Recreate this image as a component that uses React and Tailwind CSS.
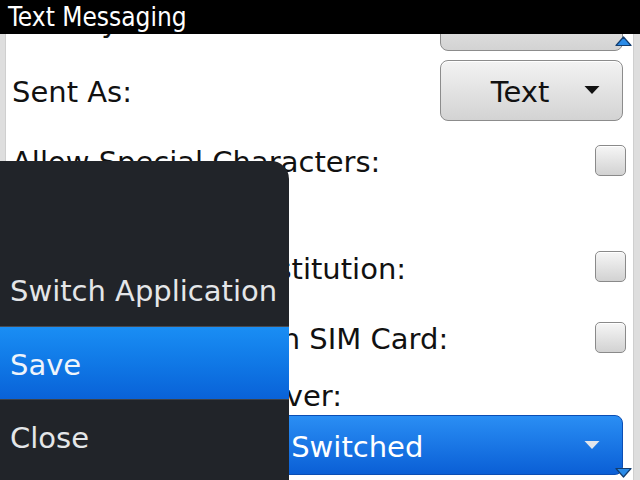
import React from "react"

const Checkbox = () => (
  <div className="w-[31px] h-[31px] rounded-[5px] border border-[#8a8a8a] bg-gradient-to-b from-[#f6f6f6] to-[#d2d2d2] shadow-[inset_0_1px_0_#ffffff]" />
)

const Arrow = ({ color }) => (
  <svg width="16" height="9" viewBox="0 0 16 9" className="absolute right-[22px] top-1/2 -translate-y-1/2">
    <path d="M0.5 0.5 L15.5 0.5 L8 8.5 Z" fill={color} />
  </svg>
)

const Choice = ({ value, blue, className }) => (
  <div
    className={`relative flex items-center pr-[23px] rounded-[8px] border ${
      blue
        ? "border-[#0b4eb4] bg-gradient-to-b from-[#2a8ef4] to-[#0b5fd6] text-white"
        : "border-[#8c8c8c] bg-gradient-to-b from-[#f3f3f3] to-[#d3d3d3] text-[#111] shadow-[inset_0_1px_0_#ffffff]"
    } ${className}`}
  >
    <span className="flex-1 pt-[4px] text-center">{value}</span>
    <Arrow color={blue ? "#e2e6ec" : "#111"} />
  </div>
)

const ScrollArrow = ({ up, className }) => (
  <svg width="17" height="10" viewBox="0 0 17 10" className={`absolute ${className}`}>
    <path
      d={up ? "M1 9.5 L8.5 1 L16 9.5 Z" : "M1 0.5 L16 0.5 L8.5 9 Z"}
      fill="#2a8be8"
      stroke="#123c6e"
      strokeWidth="1.2"
      strokeLinejoin="round"
    />
  </svg>
)

const Row = ({ label, children }) => (
  <div className="flex h-[70px] items-center justify-between">
    <span className="pt-[4px]">{label}</span>
    {children}
  </div>
)

export default function App() {
  return (
    <div className="relative w-[640px] h-[480px] overflow-hidden bg-white font-['DejaVu_Sans','Liberation_Sans',sans-serif] text-[29px] leading-[36px] text-[#111]">
      {/* Title bar */}
      <div className="relative z-10 h-[34px] bg-black pl-[8px] pt-[1px] text-white text-[26px] leading-[32px] [font-stretch:condensed]">
        Text Messaging
      </div>

      {/* Options */}
      <div className="flex h-[446px]">
        <div className="w-[6px] bg-[#dedede] border-r border-[#cfcfcf]" />
        <div className="flex-1 overflow-hidden">
          <div className="-mt-[49px] flex flex-col pl-[6px] pr-[7px]">
            <Row label="Validity Period:">
              <Choice value="Maximum" className="mr-[3px] w-[183px] h-[61px]" />
            </Row>
            <Row label="Sent As:">
              <Choice value="Text" className="mr-[3px] w-[183px] h-[61px]" />
            </Row>
            <Row label="Allow Special Characters:">
              <Checkbox />
            </Row>
            <div className="flex h-[107px] flex-col justify-center">
              <div className="h-[36px] pt-[4px]">Automatic Input</div>
              <div className="flex h-[36px] items-center justify-between">
                <span className="pt-[4px]">Character Set Substitution:</span>
                <Checkbox />
              </div>
            </div>
            <Row label="Leave Messages On SIM Card:">
              <Checkbox />
            </Row>
            <div className="pt-[2px]">
              <div className="h-[36px] pt-[4px]">Network to Send Over:</div>
              <Choice value="Circuit Switched" blue className="mt-[5px] mr-[3px] h-[60px]" />
            </div>
          </div>
        </div>
        <div className="w-[7px] bg-[#dedede] border-l border-[#cfcfcf]" />
      </div>

      <ScrollArrow up className="left-[615px] top-[36px]" />
      <ScrollArrow className="left-[615px] top-[468px]" />

      {/* Menu */}
      <div className="absolute left-0 top-[161px] w-[289px] h-[319px] rounded-tr-[18px] bg-[#212429] pt-[93px] text-[#e4e6e8]">
        <div className="flex h-[72px] items-center pl-[10px] pt-[2px]">Switch Application</div>
        <div className="h-[1px] bg-[#474b52]" />
        <div className="flex h-[72px] items-center pl-[10px] pt-[3px] bg-gradient-to-b from-[#1a8ef4] to-[#0a62d8] text-[#eef4fb]">
          Save
        </div>
        <div className="h-[1px] bg-[#3d4147]" />
        <div className="flex h-[72px] items-center pl-[10px] pt-[3px]">Close</div>
      </div>
    </div>
  )
}
